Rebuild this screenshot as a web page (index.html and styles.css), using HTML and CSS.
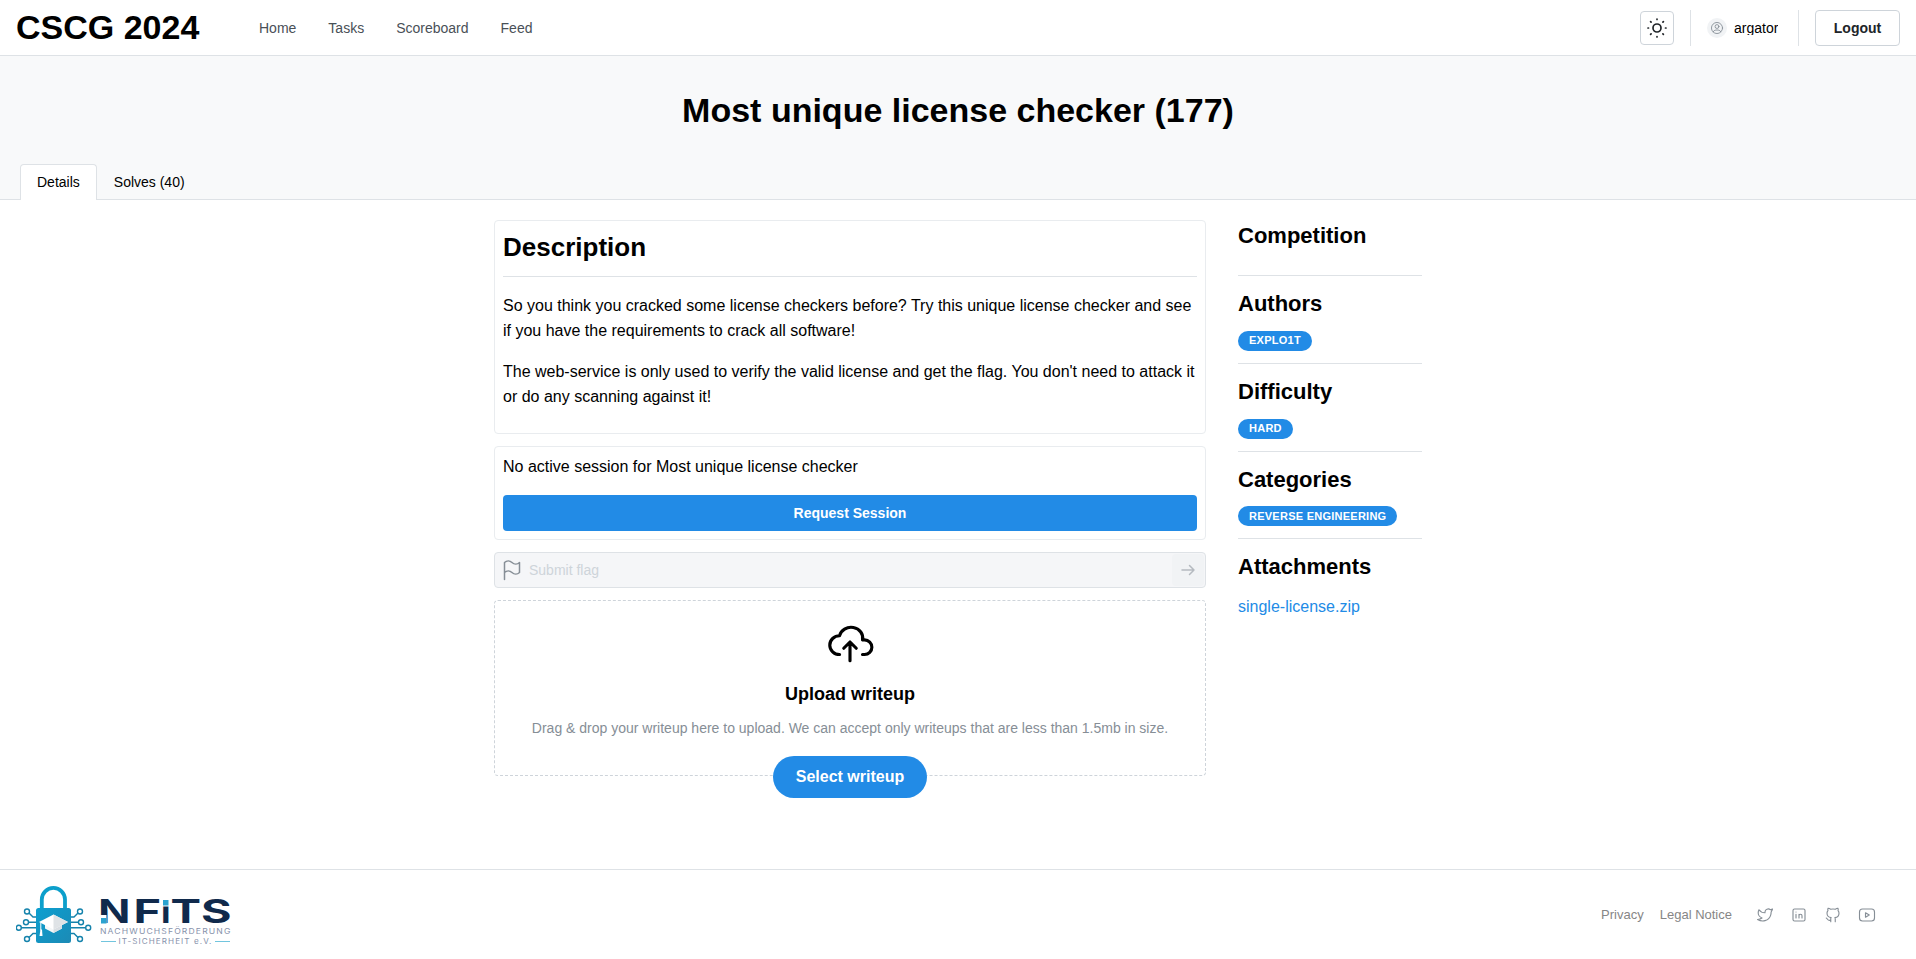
FILE: index.html
```html
<!DOCTYPE html>
<html lang="en">
<head>
<meta charset="utf-8">
<title>Most unique license checker</title>
<link rel="stylesheet" href="styles.css">
</head>
<body>
<header class="topbar">
  <div class="brand">CSCG 2024</div>
  <nav class="nav"><a>Home</a><a>Tasks</a><a>Scoreboard</a><a>Feed</a></nav>
  <div class="account">
    <button class="theme" aria-label="Toggle theme"><svg class="icon" width="24" height="24" viewBox="0 0 24 24" stroke-width="1.7"><circle cx="12" cy="12" r="4"/><path d="M3 12h.5m8.500-9v.5m8.500 8.500h.5m-9 8.500v.5M5.600 5.600l.5.500m12.300-.5l-.5.500m0 11.800l.5.500m-12.300-.5l-.5.500"/></svg></button>
    <span class="vline"></span>
    <div class="user"><span class="avatar"><svg class="icon" width="14" height="14" viewBox="0 0 24 24" stroke-width="1.500"><circle cx="12" cy="12" r="9.500"/><circle cx="12" cy="9.500" r="3.300"/><path d="M5.500 18.500a5 5 0 0 1 4.500-3h4a5 5 0 0 1 4.500 3"/></svg></span><span class="username">argator</span></div>
    <span class="vline"></span>
    <button class="logout">Logout</button>
  </div>
</header>
<section class="hero">
  <h1>Most unique license checker (177)</h1>
  <div class="tabs"><div class="tab active">Details</div><div class="tab">Solves (40)</div></div>
</section>
<main class="content">
  <div class="main-col">
    <article class="card description">
      <h2>Description</h2>
      <hr>
      <p>So you think you cracked some license checkers before? Try this unique license checker and see if you have the requirements to crack all software!</p>
      <p>The web-service is only used to verify the valid license and get the flag. You don't need to attack it or do any scanning against it!</p>
    </article>
    <section class="card session">
      <div>No active session for Most unique license checker</div>
      <button class="request">Request Session</button>
    </section>
    <div class="flag">
      <svg class="icon flag-icon" width="24" height="24" viewBox="0 0 24 24" stroke-width="1.500"><path d="M4.500 4.500a5.500 5.500 0 0 1 7.500 0a5.500 5.500 0 0 0 7.500 0v10a5.500 5.500 0 0 1-7.500 0a5.500 5.500 0 0 0-7.500 0zM4.500 21.500v-8"/></svg>
      <span class="placeholder">Submit flag</span>
      <span class="send"><svg class="icon" width="18" height="18" viewBox="0 0 24 24" stroke-width="2"><path d="M4 12h16M14 6l6 6l-6 6"/></svg></span>
    </div>
    <section class="dropzone">
      <svg class="icon" width="50" height="50" viewBox="0 0 24 24" stroke-width="1.500"><path d="M7 18a4.600 4.400 0 0 1 0-9a5 4.500 0 0 1 11 2h1a3.500 3.500 0 0 1 0 7h-1M9 15l3-3l3 3M12 12v9"/></svg>
      <h3>Upload writeup</h3>
      <p>Drag &amp; drop your writeup here to upload. We can accept only writeups that are less than 1.5mb in size.</p>
      <button class="select">Select writeup</button>
    </section>
  </div>
  <aside class="side">
    <section><h4>Competition</h4></section>
    <section><h4>Authors</h4><span class="badge">EXPLO1T</span></section>
    <section><h4>Difficulty</h4><span class="badge">HARD</span></section>
    <section><h4>Categories</h4><span class="badge">REVERSE ENGINEERING</span></section>
    <section><h4>Attachments</h4><a class="file">single-license.zip</a></section>
  </aside>
</main>
<footer class="footer">
  <svg class="logo" width="216" height="60" viewBox="16 885 216 60">
    <defs><linearGradient id="lock" x1="0" y1="0" x2="1" y2="1"><stop offset="0" stop-color="#0b9fd0"/><stop offset="1" stop-color="#1c8ab5"/></linearGradient></defs>
    <path d="M41.800 909v-9.500a11.600 11.600 0 0 1 23.200 0v9.500" fill="none" stroke="#0c9fcb" stroke-width="3.800"/>
    <g fill="none" stroke="#1583ac" stroke-width="1.400">
      <circle cx="27" cy="911.500" r="2.500"/><circle cx="26" cy="922.300" r="2.500"/><circle cx="18.800" cy="927.800" r="2.500"/><circle cx="27" cy="939" r="2.500"/>
      <path d="M29 913l4 4h4M28.500 922.300h8M21.300 927.800h15M29 937.500l4-4h4"/>
      <circle cx="80" cy="911.500" r="2.500"/><circle cx="81" cy="922.300" r="2.500"/><circle cx="88.200" cy="927.800" r="2.500"/><circle cx="80" cy="939" r="2.500"/>
      <path d="M78 913l-4 4h-4M78.500 922.300h-8M85.700 927.800h-15M78 937.500l-4-4h-4"/>
    </g>
    <rect x="36" y="908" width="35" height="35" rx="2.500" fill="url(#lock)"/>
    <path d="M45 924v4.500l8.500 4.500l8.500-4.500v-4.500z" fill="#f4f7f8"/><path d="M53.500 924v9l8.500-4.500v-4.500z" fill="#d9dee2"/>
    <path d="M39 922l14.500-7.500l14.500 7.500l-14.500 7.500z" fill="#fff"/><path d="M53.500 914.500l14.500 7.500l-14.500 7.500z" fill="#dfe3e6"/>
    <path d="M40.800 922.500v8" stroke="#fff" stroke-width="1"/><path d="M40.500 929.500h1.500l.5 6.500h-3z" fill="#fff"/>
    <g class="wordmark"><text x="98.300" y="923.300" textLength="32" lengthAdjust="spacingAndGlyphs">N</text><text x="133.500" y="923.300" textLength="27.500" lengthAdjust="spacingAndGlyphs">F</text><text x="161" y="923.300" textLength="9.500" lengthAdjust="spacingAndGlyphs">i</text><text x="170.500" y="923.300" textLength="30.500" lengthAdjust="spacingAndGlyphs">T</text><text x="201" y="923.300" textLength="30.500" lengthAdjust="spacingAndGlyphs">S</text></g>
    <rect x="162" y="897" width="7.500" height="9.500" fill="#fff"/><rect x="163" y="900" width="5.500" height="5.500" fill="#2ca3d0"/><rect x="100" y="915" width="6.500" height="10" fill="#fff"/><rect x="101" y="918" width="5.500" height="5.500" fill="#2ca3d0"/>
    <g class="tagline"><text x="100" y="934" textLength="131.500" lengthAdjust="spacingAndGlyphs">NACHWUCHSFÖRDERUNG</text><text x="118.500" y="944" textLength="94" lengthAdjust="spacingAndGlyphs">IT-SICHERHEIT e.V.</text></g>
    <path d="M101 941.500h15M215 941.500h15" stroke="#72c5de" stroke-width="1"/>
  </svg>
  <div class="legal"><a>Privacy</a><a>Legal Notice</a></div>
  <div class="social">
    <svg class="icon" width="18" height="18" viewBox="0 0 24 24" stroke-width="1.500"><path d="M22 4.010c-1 .490-1.980.689-3 .990c-1.121-1.265-2.783-1.335-4.380-.737s-2.643 2.060-2.620 3.737v1c-3.245.083-6.135-1.395-8-4c0 0-4.182 7.433 4 11c-1.872 1.247-3.739 2.088-6 2c3.308 1.803 6.913 2.423 10.034 1.517c3.580-1.040 6.522-3.723 7.651-7.742a13.840 13.840 0 0 0 .497-3.753c0-.249 1.510-2.772 1.818-4.013z"/></svg>
    <svg class="icon" width="18" height="18" viewBox="0 0 24 24" stroke-width="1.500"><rect x="4" y="4" width="16" height="16" rx="2"/><path d="M8 11v5M8 8v.010M12 16v-5M16 16v-3a2 2 0 0 0-4 0"/></svg>
    <svg class="icon" width="18" height="18" viewBox="0 0 24 24" stroke-width="1.500"><path d="M9 19c-4.300 1.400-4.300-2.500-6-3m12 5v-3.500c0-1 .1-1.400-.5-2c2.800-.3 5.500-1.400 5.500-6a4.600 4.600 0 0 0-1.300-3.200a4.200 4.200 0 0 0-.1-3.200s-1.100-.3-3.500 1.300a12.300 12.300 0 0 0-6.200 0c-2.400-1.600-3.500-1.300-3.500-1.300a4.200 4.200 0 0 0-.1 3.200a4.600 4.600 0 0 0-1.300 3.200c0 4.600 2.700 5.700 5.500 6c-.6.6-.6 1.200-.5 2v3.500"/></svg>
    <svg class="icon" width="18" height="18" viewBox="0 0 24 24" stroke-width="1.500"><rect x="2" y="4" width="20" height="16" rx="4"/><path d="M10 9l5 3l-5 3z"/></svg>
  </div>
</footer>
</body>
</html>
```

FILE: styles.css
```css
* { box-sizing: border-box; }
body { margin: 0; min-height: 959px; display: flex; flex-direction: column; font: 16px/1.55 "Liberation Sans", Arial, sans-serif; color: #000; background: #fff; }
h1, h2, h3, h4, p { margin: 0; }
button { font-family: inherit; padding: 0; }
.icon { display: block; fill: none; stroke: currentColor; stroke-linecap: round; stroke-linejoin: round; flex: none; }
.topbar { height: 56px; padding: 0 16px; border-bottom: 1px solid #dee2e6; display: flex; align-items: center; }
.brand { width: 227px; padding-bottom: 1px; font-size: 34px; font-weight: 700; line-height: 44px; }
.nav { display: flex; padding-top: 2px; font-size: 14px; color: #495057; }
.nav a { padding: 0 16px; }
.account { margin-left: auto; display: flex; align-items: center; gap: 16px; }
.theme { width: 34px; height: 34px; display: grid; place-items: center; background: #fff; border: 1px solid #ced4da; border-radius: 4px; color: #212529; }
.vline { width: 1px; height: 36px; background: #dee2e6; }
.user { display: flex; align-items: center; gap: 7px; width: 75px; }
.avatar { width: 20px; height: 20px; border-radius: 50%; background: #f1f3f5; color: #868e96; display: grid; place-items: center; }
.username { font-size: 14px; line-height: 14px; overflow: hidden; }
.logout { width: 85px; height: 36px; border: 1px solid #ced4da; border-radius: 4px; background: #fff; color: #212529; font-size: 14px; font-weight: 600; }
.hero { height: 144px; background: #f8f9fa; border-bottom: 1px solid #dee2e6; display: flex; flex-direction: column; justify-content: space-between; }
.hero h1 { padding-top: 32px; font-size: 34px; line-height: 44px; text-align: center; }
.tabs { display: flex; padding-left: 20px; margin-bottom: -1px; font-size: 14px; }
.tab { height: 36px; padding: 0 16px; line-height: 34px; border: 1px solid transparent; border-bottom: 0; border-radius: 4px 4px 0 0; }
.tab.active { background: #fff; border-color: #dee2e6; }
.content { display: flex; gap: 32px; width: 928px; margin: 20px auto 0; }
.main-col { width: 712px; display: flex; flex-direction: column; gap: 12px; }
.card { border: 1px solid #e9ecef; border-radius: 4px; padding: 8px; }
.description { height: 214px; }
.description h2 { padding-top: 1px; font-size: 26px; line-height: 35px; }
.description hr { margin: 11px 0 16px; border: 0; border-top: 1px solid #dee2e6; }
.description p { margin-bottom: 16px; line-height: 25px; }
.session { height: 94px; display: flex; flex-direction: column; justify-content: space-between; }
.request { height: 36px; border: 0; border-radius: 4px; background: #228be6; color: #fff; font-size: 14px; font-weight: 600; }
.flag { height: 36px; display: flex; align-items: center; background: #f5f6f8; border: 1px solid #dee2e6; border-radius: 4px; padding: 0 1px 0 5px; color: #868e96; }
.placeholder { margin-left: 5px; padding-top: 2px; font-size: 14px; color: #ced4da; }
.send { margin-left: auto; width: 32px; height: 32px; border-radius: 4px; background: #f1f3f5; color: #b5bac0; display: grid; place-items: center; }
.dropzone { height: 176px; border: 1px dashed #ced4da; border-radius: 4px; display: flex; flex-direction: column; align-items: center; padding-top: 16px; }
.dropzone h3 { margin-top: 13px; font-size: 18px; line-height: 28px; }
.dropzone p { margin-top: 9px; font-size: 14px; line-height: 22px; color: #868e96; }
.select { margin-top: 17px; width: 154px; height: 42px; flex: none; border: 0; border-radius: 21px; background: #228be6; color: #fff; font-size: 16px; font-weight: 600; }
.side { width: 184px; }
.side section { height: 88px; padding-top: 12px; border-bottom: 1px solid #dee2e6; }
.side section:first-child { height: 56px; padding-top: 0; }
.side section:nth-child(4) { height: 87px; }
.side section:nth-child(4) .badge { margin-top: 11px; line-height: 20px; }
.side section:last-child { border: 0; }
.side h4 { font-size: 22px; line-height: 31px; }
.badge { display: block; width: fit-content; height: 20px; margin-top: 12px; padding: 0 11px; border-radius: 10px; background: #228be6; color: #fff; font-size: 11px; line-height: 18px; font-weight: 700; letter-spacing: .25px; }
.file { display: block; margin-top: 13px; color: #228be6; }
.footer { height: 90px; margin-top: auto; padding: 0 32px 0 16px; border-top: 1px solid #dee2e6; display: flex; align-items: center; color: #868686; }
.legal { margin-left: auto; padding-top: 2px; display: flex; gap: 16px; font-size: 13px; }
.social { display: flex; gap: 16px; margin: 0 8px 0 24px; color: #868e96; }
.wordmark { font: 700 32px Inter, sans-serif; fill: #102a4c; }
.tagline { font: 7.500px Inter, sans-serif; letter-spacing: 1px; fill: #8792ab; }
```
